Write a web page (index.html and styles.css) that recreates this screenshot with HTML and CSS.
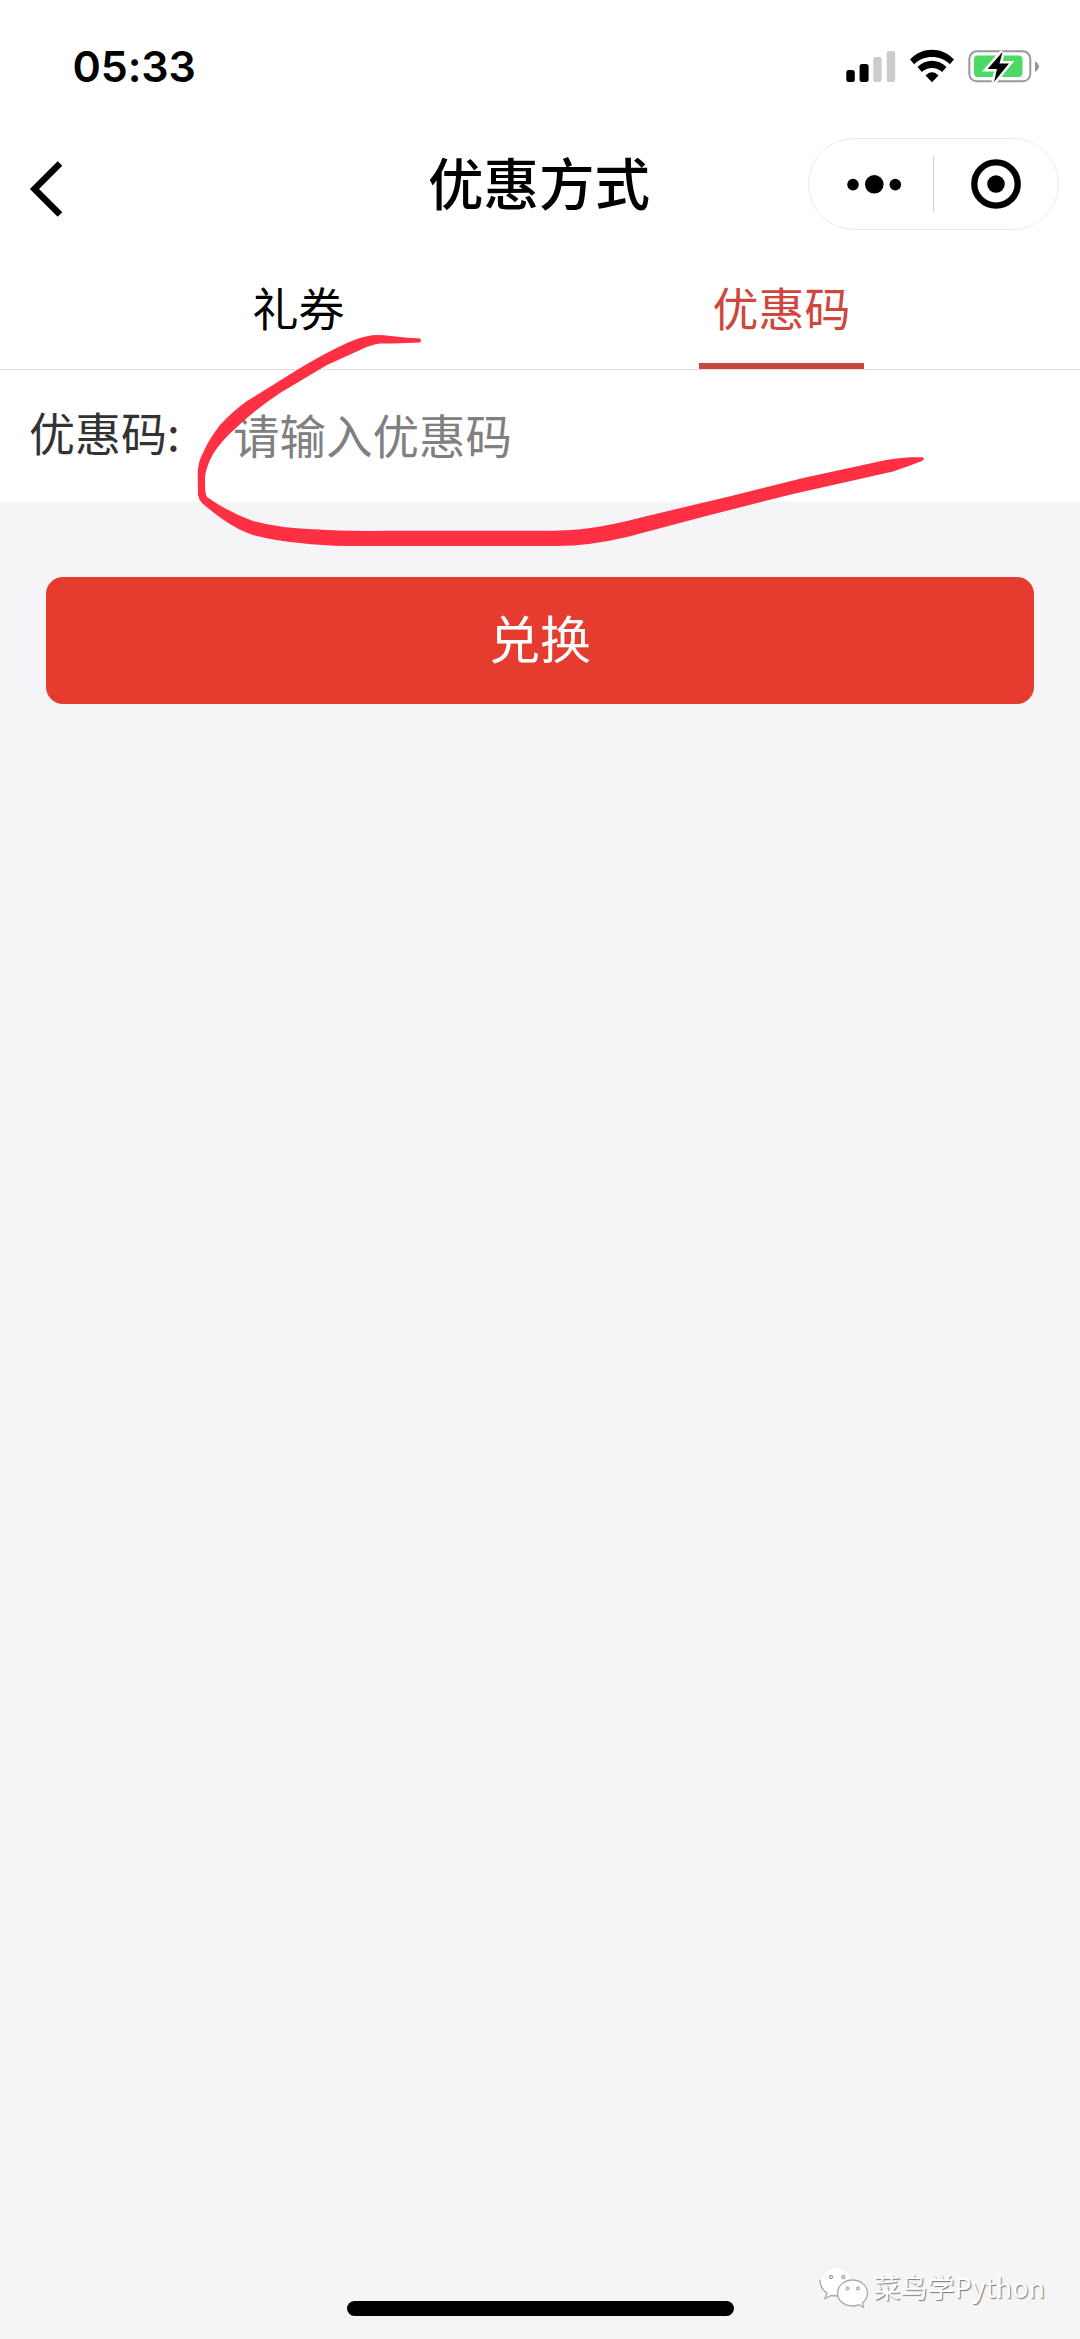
FILE: index.html
```html
<!DOCTYPE html>
<html lang="zh-CN">
<head>
<meta charset="utf-8">
<title>优惠方式</title>
<link rel="stylesheet" href="styles.css">
</head>
<body>
<div class="screen">
  <header class="header">
    <div class="status">
      <span class="time">05:33</span>
      <svg class="indicators" width="194" height="36" viewBox="0 0 194 36">
        <g>
          <rect x="0.300" y="22" width="8.500" height="12" rx="2.500"/>
          <rect x="13.600" y="16" width="9" height="18" rx="2.500"/>
          <rect x="27.200" y="9" width="8.500" height="25" rx="2.500" fill="#ccc"/>
          <rect x="40.700" y="3" width="8.500" height="31" rx="2.500" fill="#ccc"/>
        </g>
        <g>
          <path d="M64 11.500C76 -1.500 96 -1.500 108 11.500L103.800 16.200C94 6.700 78 6.700 68.200 16.200Z"/>
          <path d="M71.500 19C80 10.500 92 10.500 100.500 19L96.100 24C90.500 18.800 81.500 18.800 75.900 24Z"/>
          <path d="M79.500 27.500C83.500 23 88.500 23 92.500 27.500L86 34.300Z"/>
        </g>
        <rect x="123.300" y="3.300" width="61" height="30" rx="7.500" fill="none" stroke="#999" stroke-width="2"/>
        <rect x="128" y="7.500" width="48.500" height="21.500" rx="4" fill="#4cd964"/>
        <path d="M189 13Q197 18.500 189 24Z" fill="#999"/>
        <path d="M156.500 4L141.500 21H151L148 34L163 15.500H153.500Z" stroke="#fff" stroke-width="5" paint-order="stroke"/>
      </svg>
    </div>
    <div class="navbar">
      <svg class="back" width="36" height="58" viewBox="0 0 36 58"><path d="M32 3.500L6.500 29L32 54.500" fill="none" stroke="#000" stroke-width="6.500"/></svg>
      <h1 class="title">优惠方式</h1>
      <div class="capsule">
        <svg class="more" width="56" height="20" viewBox="0 0 56 20"><circle cx="7" cy="10.600" r="5.800"/><circle cx="28.300" cy="10.300" r="9.300"/><circle cx="49.300" cy="10.600" r="5.800"/></svg>
        <span class="divider"></span>
        <svg class="close" width="50" height="50" viewBox="0 0 50 50"><circle cx="25" cy="25" r="21.700" fill="none" stroke="#000" stroke-width="6.300"/><circle cx="25" cy="25" r="8.800"/></svg>
      </div>
    </div>
  </header>
  <nav class="tabs">
    <a class="tab">礼券</a>
    <a class="tab active">优惠码</a>
  </nav>
  <main class="content">
    <div class="field">
      <label class="label" for="code">优惠码:</label>
      <input class="code" id="code" type="text" placeholder="请输入优惠码">
    </div>
    <button class="redeem" type="button">兑换</button>
  </main>
  <svg class="stroke" width="740" height="224" viewBox="190 329 740 224">
    <path d="M420 338.500Q404 337.500 391 336Q381 334.500 372 335.200Q360 337 347 343Q323 354 297 370L247 401Q233 411 220 425Q209 439 203 453Q198 461 197.700 474L198 495Q199 500 202 503Q211 511 223 519.500Q238 530 253 535Q275 541 300 543Q322 545.500 347 546H557Q589 546 627 537L710 515L793 494L893 471.500Q908 466.500 922 461Q926 458 922 457.300H910Q892 458.500 877 462L803 478L727 497L643 517Q620 523 603 526Q578 530.500 553 530.700H385Q347 531.500 313 529.300Q279 528 253 521Q228 512 207 497Q205 493 205 486V477Q206 467 213 454Q222 440 237 427Q256 409 280 393L327 365L360 350Q371 344.500 380 343.500H393L420 342.500Q422 340.500 420 338.500Z"/>
  </svg>
  <div class="home-bar"></div>
  <div class="watermark">
    <svg width="50" height="43" viewBox="0 0 50 43">
      <g fill="#fff" stroke="#aaa" stroke-width="1.300">
        <path d="M17 1C8 1 1 7.500 1 15.500C1 20 3.500 24.500 8 27L6 32.500L12.500 29.500C15 30.500 21 31 24 29C32 27 34 20 33 13C31 5 25 1 17 1Z" stroke="#eee"/>
        <path d="M1 14C1 21 4 24.500 8 27L6 32.500L12.500 29.500L19 30" fill="none"/>
        <path d="M33.500 14C25 14 18.500 20 18.500 27C18.500 34.500 25 40 33.500 40C36 40 38 39.500 40 38.800L44.500 41.500L43.500 37C46.500 34.500 48.500 31 48.500 27C48.500 20 42 14 33.500 14Z"/>
      </g>
      <g fill="#ddd" stroke="#999" stroke-width="1"><circle cx="12" cy="11" r="1.700"/><circle cx="24.500" cy="11" r="1.700"/><circle cx="28.500" cy="22.500" r="1.500"/><circle cx="39" cy="22.500" r="1.500"/></g>
    </svg>
    <span class="account">菜鸟学Python</span>
  </div>
</div>
</body>
</html>
```
FILE: styles.css
```css
* { box-sizing: border-box; }
body {
  margin: 0;
  font-family: "Noto Sans CJK SC", sans-serif;
  color: #000;
}
.screen {
  position: relative;
  display: flex;
  flex-direction: column;
  width: 1080px;
  height: 2339px;
  overflow: hidden;
  background: #f5f5f7;
}
.header, .tabs { background: #fff; }
.header { height: 254px; padding-top: 48px; }
.status {
  display: flex;
  align-items: center;
  justify-content: space-between;
  height: 36px;
  padding: 0 40px 0 72.500px;
}
.time {
  font: 600 43px/36px Inter, sans-serif;
  letter-spacing: -0.1px;
}
.navbar {
  display: grid;
  grid-template-columns: 300px 1fr 300px;
  align-items: center;
  height: 92px;
  margin-top: 54px;
  padding: 0 21px 0 28px;
}
.back { margin-top: 10px; }
.title {
  margin: 0 9px 6px 0;
  font-size: 55.5px;
  line-height: 80px;
  font-weight: 500;
  text-align: center;
  white-space: nowrap;
}
.capsule {
  display: flex;
  align-items: center;
  justify-self: end;
  width: 251px;
  height: 92px;
  padding-left: 37px;
  border: 1px solid #ebebeb;
  border-radius: 46px;
}
.divider { width: 1px; height: 56px; margin: 0 37px 0 31px; background: #d0d0d0; }
.tabs {
  display: flex;
  height: 116px;
  padding: 0 57px;
  border-bottom: 1px solid #e0e0e0;
}
.tab {
  display: flex;
  flex: 1;
  flex-direction: column;
  align-items: center;
  justify-content: space-between;
  padding-top: 18px;
  font-size: 46px;
  line-height: 68px;
}
.active { color: #cf463c; }
.active::after { content: ""; width: 165px; height: 6px; background: #c9473f; }
.field {
  display: flex;
  height: 132px;
  padding: 0 30px 0 29px;
  background: #fff;
}
.label { width: 204px; padding-top: 27px; font-size: 46px; line-height: 68px; color: #333; }
.code {
  flex: 1;
  min-width: 0;
  height: 68px;
  margin-top: 30px;
  padding: 0;
  border: 0;
  background: none;
  font: 400 46.5px/68px "Noto Sans CJK SC", sans-serif;
}
.code::placeholder { color: #808080; opacity: 1; }
.redeem {
  display: block;
  width: 988px;
  height: 127px;
  margin: 75px auto 0;
  padding: 0 0 6px;
  border: 0;
  border-radius: 17px;
  background: #e63c30;
  color: #fff;
  font: 400 51px/121px "Noto Sans CJK SC", sans-serif;
}
.stroke {
  position: absolute;
  left: 190px;
  top: 329px;
  fill: #ff3044;
}
.home-bar {
  width: 387px;
  height: 15px;
  margin: auto auto 23px;
  border-radius: 8px;
  background: #000;
}
.watermark {
  position: absolute;
  right: 35px;
  bottom: 30px;
  display: flex;
  align-items: center;
  gap: 4px;
}
.account {
  padding-bottom: 2px;
  font-size: 27px;
  line-height: 40px;
  color: #fff;
  text-shadow: 1px 1px 1px #777;
}
```
